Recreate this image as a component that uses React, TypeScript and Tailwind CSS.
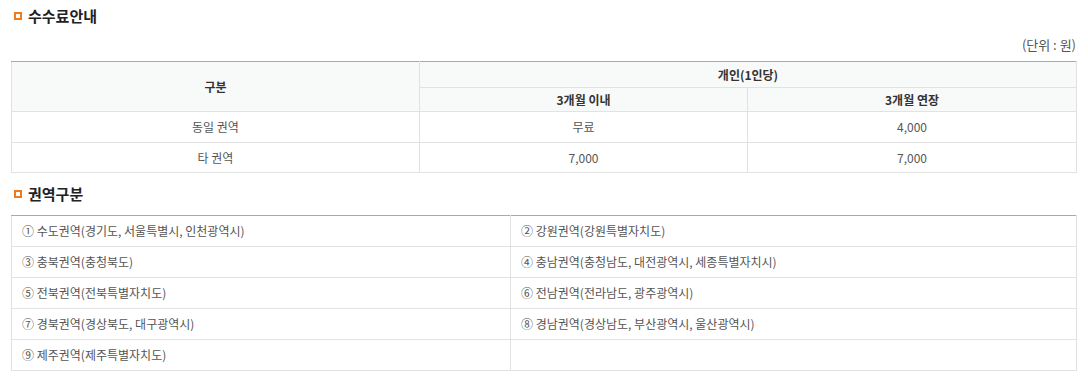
import React from "react";

const font = { fontFamily: '"Noto Sans CJK KR", "Noto Sans", sans-serif' };

const SectionTitle = ({ children }: { children: React.ReactNode }) => (
  <h2 className="flex items-center gap-[6px] text-[15px] font-bold leading-[20px] text-[#222]">
    <span className="block w-[8px] h-[8px] border-2 border-[#f27a1a]"></span>
    {children}
  </h2>
);

const regions: [string, string][] = [
  ["① 수도권역(경기도, 서울특별시, 인천광역시)", "② 강원권역(강원특별자치도)"],
  ["③ 충북권역(충청북도)", "④ 충남권역(충청남도, 대전광역시, 세종특별자치시)"],
  ["⑤ 전북권역(전북특별자치도)", "⑥ 전남권역(전라남도, 광주광역시)"],
  ["⑦ 경북권역(경상북도, 대구광역시)", "⑧ 경남권역(경상남도, 부산광역시, 울산광역시)"],
  ["⑨ 제주권역(제주특별자치도)", ""],
];

const App = () => {
  return (
    <div className="w-[1088px] h-[385px] bg-white px-[11px] pt-[6px]" style={font}>
      {/* 수수료안내 */}
      <div className="pl-[3px]">
        <SectionTitle>수수료안내</SectionTitle>
      </div>
      <p className="mt-[10px] text-right text-[13px] leading-[18px] text-[#555] pr-[1px]">(단위 : 원)</p>

      <table className="mt-[7px] w-full border-collapse table-fixed text-[12px] text-center">
        <colgroup>
          <col className="w-[408px]" />
          <col className="w-[328px]" />
          <col />
        </colgroup>
        <thead>
          <tr className="h-[26px] border-t border-t-[#a3adab]">
            <th rowSpan={2} className="bg-[#f8f9f9] border border-[#e2e2e2] border-t-[#a3adab] font-bold text-[#333]">
              구분
            </th>
            <th colSpan={2} className="bg-[#f8f9f9] border border-[#e2e2e2] border-t-[#a3adab] font-bold text-[#333]">
              개인(1인당)
            </th>
          </tr>
          <tr className="h-[24px]">
            <th className="bg-[#f8f9f9] border border-[#e2e2e2] font-bold text-[#333]">3개월 이내</th>
            <th className="bg-[#f8f9f9] border border-[#e2e2e2] font-bold text-[#333]">3개월 연장</th>
          </tr>
        </thead>
        <tbody className="text-[#555]">
          <tr className="h-[31px]">
            <td className="border border-[#e2e2e2]">동일 권역</td>
            <td className="border border-[#e2e2e2]">무료</td>
            <td className="border border-[#e2e2e2]">4,000</td>
          </tr>
          <tr className="h-[30px]">
            <td className="border border-[#e2e2e2]">타 권역</td>
            <td className="border border-[#e2e2e2]">7,000</td>
            <td className="border border-[#e2e2e2]">7,000</td>
          </tr>
        </tbody>
      </table>

      {/* 권역구분 */}
      <div className="pl-[3px] mt-[11px]">
        <SectionTitle>권역구분</SectionTitle>
      </div>

      <table className="mt-[11px] w-full border-collapse table-fixed text-[12px] text-left text-[#555]">
        <colgroup>
          <col className="w-[499px]" />
          <col />
        </colgroup>
        <tbody>
          {regions.map(([a, b], i) => (
            <tr key={i} className={i === 0 ? "h-[31px] border-t border-t-[#a3adab]" : "h-[31px]"}>
              <td className={`border border-[#e2e2e2] pl-[10px] ${i === 0 ? "border-t-[#a3adab]" : ""}`}>{a}</td>
              <td className={`border border-[#e2e2e2] pl-[10px] ${i === 0 ? "border-t-[#a3adab]" : ""}`}>{b}</td>
            </tr>
          ))}
        </tbody>
      </table>
    </div>
  );
};

export default App;
